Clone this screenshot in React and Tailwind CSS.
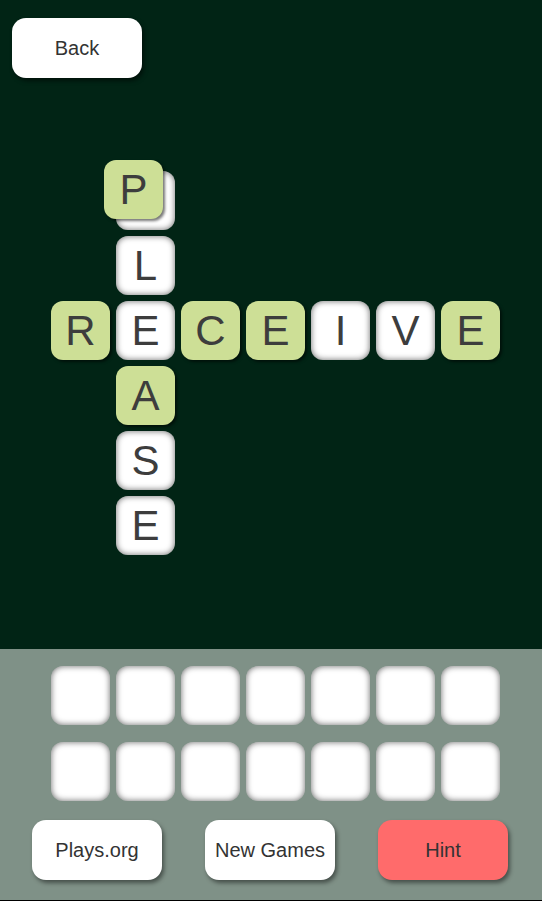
import React from 'react';

const FONT = { fontFamily: '"Liberation Sans", Arial, sans-serif' };

// cells of the crossword: [col, row, letter, green]
const cells = [
  [2, 1, '', false],
  [2, 2, 'L', false],
  [1, 3, 'R', true],
  [2, 3, 'E', false],
  [3, 3, 'C', true],
  [4, 3, 'E', true],
  [5, 3, 'I', false],
  [6, 3, 'V', false],
  [7, 3, 'E', true],
  [2, 4, 'A', true],
  [2, 5, 'S', false],
  [2, 6, 'E', false],
];

const colClass = ['', 'col-start-1', 'col-start-2', 'col-start-3', 'col-start-4', 'col-start-5', 'col-start-6', 'col-start-7'];
const rowClass = ['', 'row-start-1', 'row-start-2', 'row-start-3', 'row-start-4', 'row-start-5', 'row-start-6'];

const Tile = ({ letter, green, className = '' }) => (
  <div
    className={
      'w-[59px] h-[59px] rounded-[12px] flex items-center justify-center text-[42px] leading-none text-[#3d3d3d] ' +
      (green
        ? 'bg-[#cddf96] shadow-[2px_2px_3px_rgba(0,0,0,0.55)] '
        : 'bg-white shadow-[inset_0_0_6px_rgba(0,0,0,0.6)] ') +
      className
    }
  >
    {letter}
  </div>
);

const Button = ({ children, className = '' }) => (
  <button
    className={
      'w-[130px] h-[60px] rounded-[14px] text-[20px] text-[#333] shadow-[2px_3px_4px_rgba(0,0,0,0.45)] ' +
      className
    }
  >
    {children}
  </button>
);

export default function App() {
  return (
    <div className="w-[542px] h-[901px] flex flex-col border-b border-black" style={FONT}>
      {/* board */}
      <div className="h-[649px] bg-[#012415] flex flex-col">
        <div className="pt-[18px] pl-[12px]">
          <button className="w-[130px] h-[60px] rounded-[14px] bg-white text-[20px] text-[#333] shadow-[2px_3px_4px_rgba(0,0,0,0.5)]">
            Back
          </button>
        </div>

        <div className="mt-[93px] ml-[51px] grid grid-cols-[repeat(7,59px)] grid-rows-[repeat(6,59px)] gap-[6px]">
          {cells.map(([c, r, l, g], i) => (
            <div key={i} className={colClass[c] + ' ' + rowClass[r] + ' relative'}>
              <Tile letter={l} green={g} />
              {c === 2 && r === 1 && (
                <div className="absolute left-[-12px] top-[-11px]">
                  <Tile letter="P" green />
                </div>
              )}
            </div>
          ))}
        </div>
      </div>

      {/* letter pad */}
      <div className="flex-1 bg-[#7f9187] flex flex-col pt-[17px]">
        <div className="pl-[51px] flex flex-col gap-[17px]">
          {[0, 1].map(row => (
            <div key={row} className="flex gap-[6px]">
              {[0, 1, 2, 3, 4, 5, 6].map(i => (
                <Tile key={i} letter="" green={false} />
              ))}
            </div>
          ))}
        </div>

        <div className="mt-[19px] pl-[32px] flex gap-[43px]">
          <Button className="bg-white">Plays.org</Button>
          <Button className="bg-white">New Games</Button>
          <Button className="bg-[#ff6b6b]">Hint</Button>
        </div>
      </div>
    </div>
  );
}
